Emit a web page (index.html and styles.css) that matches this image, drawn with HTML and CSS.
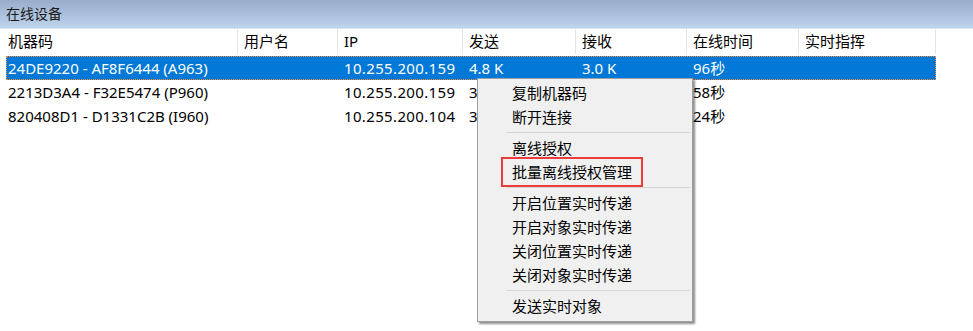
FILE: index.html
```html
<!DOCTYPE html>
<html lang="zh-CN">
<head>
    <meta charset="UTF-8">
    <title>在线设备</title>
    <link rel="stylesheet" href="styles.css">
</head>
<body>
    <div class="window">
        <div class="title-bar">在线设备</div>

        <div class="list">
            <div class="row header">
                <div class="cell">机器码</div>
                <div class="cell">用户名</div>
                <div class="cell">IP</div>
                <div class="cell">发送</div>
                <div class="cell">接收</div>
                <div class="cell">在线时间</div>
                <div class="cell">实时指挥</div>
            </div>
            <div class="row selected">
                <div class="cell">24DE9220 - AF8F6444 (A963)</div>
                <div class="cell"></div>
                <div class="cell ip">10.255.200.159</div>
                <div class="cell">4.8 K</div>
                <div class="cell">3.0 K</div>
                <div class="cell">96秒</div>
                <div class="cell"></div>
            </div>
            <div class="row">
                <div class="cell">2213D3A4 - F32E5474 (P960)</div>
                <div class="cell"></div>
                <div class="cell ip">10.255.200.159</div>
                <div class="cell">3</div>
                <div class="cell"></div>
                <div class="cell">58秒</div>
                <div class="cell"></div>
            </div>
            <div class="row">
                <div class="cell">820408D1 - D1331C2B (I960)</div>
                <div class="cell"></div>
                <div class="cell ip">10.255.200.104</div>
                <div class="cell">3</div>
                <div class="cell"></div>
                <div class="cell">24秒</div>
                <div class="cell"></div>
            </div>
        </div>

        <!-- right-click menu over the list -->
        <div class="context-menu">
            <div class="menu-item">复制机器码</div>
            <div class="menu-item">断开连接</div>
            <div class="menu-sep"></div>
            <div class="menu-item">离线授权</div>
            <div class="menu-item marked">批量离线授权管理</div>
            <div class="menu-sep"></div>
            <div class="menu-item">开启位置实时传递</div>
            <div class="menu-item">开启对象实时传递</div>
            <div class="menu-item">关闭位置实时传递</div>
            <div class="menu-item">关闭对象实时传递</div>
            <div class="menu-sep"></div>
            <div class="menu-item">发送实时对象</div>
        </div>
    </div>
</body>
</html>
```

FILE: styles.css
```css
body {
    margin: 0;
    background-color: #fff;
    font-family: "Noto Sans", "Noto Sans CJK SC", sans-serif;
    font-size: 15px;
    color: #000;
}
.window {
    position: relative;
    width: 973px;
    height: 331px;
    overflow: hidden;
}
.title-bar {
    height: 29px;
    line-height: 28px;
    padding-left: 6px;
    font-size: 14px;
    color: #1a1a1a;
    background: linear-gradient(to bottom, #99adc9, #bdd4ed);
    border-bottom: 1px solid #dbe6f3;
    box-sizing: border-box;
}
.list {
    padding-left: 6px;
}
.row {
    display: grid;
    grid-template-columns: 232px 100px 125px 113px 111px 112px 137px;
    width: 930px;
    height: 24px;
    line-height: 24px;
    white-space: nowrap;
}
.cell {
    padding-left: 6px;
    overflow: hidden;
}
.cell:first-child {
    padding-left: 2px;
}
.ip {
    letter-spacing: 0.35px;
}
.header {
    height: 25px;
    line-height: 25px;
    margin-bottom: 2px;
}
.header .cell {
    border-right: 1px solid #e5e5e5;
}
.selected {
    background-color: #0078d7;
    color: #fff;
    outline: 1px dotted #ff8c2a;
    outline-offset: -1px;
}
.context-menu {
    position: absolute;
    left: 477px;
    top: 78px;
    width: 214px;
    padding: 2px 0 3px;
    background-color: #f0f0f0;
    border: 1px solid #a0a0a0;
    box-shadow: 2px 2px 2px rgba(0, 0, 0, 0.45);
}
.menu-item {
    height: 24px;
    line-height: 24px;
    padding-left: 34px;
    color: #000;
}
.menu-item.marked {
    margin: 0 52px 0 26px;
    padding-left: 8px;
    outline: 2px solid #ee3b3b;
    outline-offset: 1px;
}
.menu-sep {
    height: 1px;
    margin: 3px 2px 3px 29px;
    background-color: #d7d7d7;
}
```
